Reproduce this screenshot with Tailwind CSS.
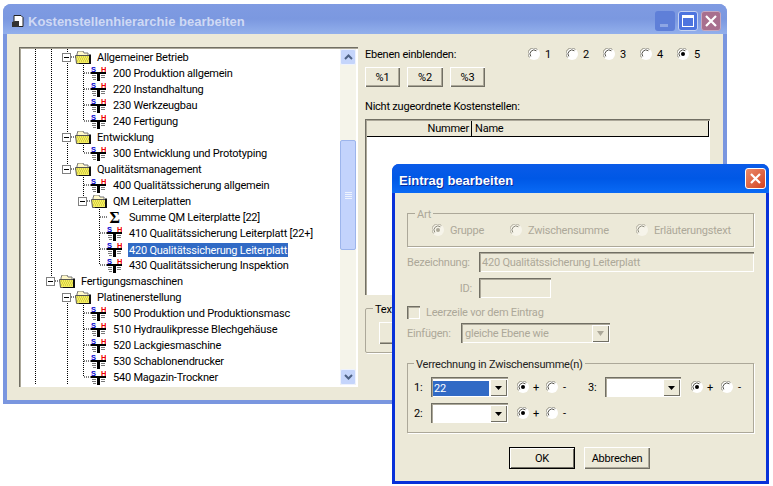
<!DOCTYPE html>
<html lang="de">
<head>
  <meta charset="UTF-8" />
  <title>Kostenstellenhierarchie bearbeiten</title>
  <script src="https://cdn.jsdelivr.net/npm/@tailwindcss/browser@4"></script>
</head>
<body class="bg-white w-[773px] h-[486px] overflow-hidden relative font-['Roboto',sans-serif] text-[11px] tracking-[-0.22px] leading-[16px] text-black [&_span:not(:has(*))]:translate-y-px [&_button]:pt-[2px]">

  <!-- shared icons -->
  <svg class="hidden">
    <symbol id="cost" viewBox="0 0 15 15">
      <text x="0" y="5.500" font-size="7.500" font-weight="bold" fill="#0000d0" font-family="Liberation Sans">S</text>
      <text x="10" y="5.500" font-size="7.500" font-weight="bold" fill="#f00000" font-family="Liberation Sans">H</text>
      <rect x="0" y="6" width="15" height="2" fill="#000"/>
      <rect x="6" y="8" width="3" height="7" fill="#000"/>
      <path d="M1 9.500h4M1 11.500h4M2 13.500h3M10 9.500h4M10 11.500h4" stroke="#777" fill="none"/>
    </symbol>
    <symbol id="folder" viewBox="0 0 16 13">
      <path d="M2 3l1-3h5l1 2h4v3H2z" fill="#fff8c8" stroke="#777"/>
      <path d="M0.500 4.500h14v8h-13z" fill="#f6f060" stroke="#555"/>
      <path d="M2 6h11M3 8h11M2 10h11" stroke="#b8b030" stroke-dasharray="1 1"/>
      <path d="M15 3.500v9.500H4" stroke="#111" stroke-width="2" fill="none"/>
    </symbol>
    <symbol id="minus" viewBox="0 0 9 9">
      <rect x="0.500" y="0.500" width="8" height="8" fill="#fff" stroke="#808080"/>
      <path d="M2 4.500h5" stroke="#000"/>
    </symbol>
    <symbol id="radio" viewBox="0 0 12 12">
      <circle cx="6" cy="6" r="6" fill="#fff"/>
      <path d="M1.600 9.500A5.500 5.500 0 0 1 9.500 1.600" fill="none" stroke="#8c8a7c"/>
      <path d="M2.800 8.400A4 4 0 0 1 8.400 2.800" fill="none" stroke="#55544c"/>
    </symbol>
    <symbol id="radio-off" viewBox="0 0 12 12">
      <circle cx="6" cy="6" r="6" fill="#f6f4ea"/>
      <path d="M1.600 9.500A5.500 5.500 0 0 1 9.500 1.600" fill="none" stroke="#aca899"/>
      <path d="M2.800 8.400A4 4 0 0 1 8.400 2.800" fill="none" stroke="#8c8a7c"/>
    </symbol>
    <symbol id="down" viewBox="0 0 17 18">
      <path d="M5 7h7l-3.500 4z" fill="#000"/>
    </symbol>
  </svg>

  <!-- main window -->
  <div class="absolute left-[3px] top-[4px] w-[724px] h-[400px] rounded-t-[8px] bg-[#7a96df] flex flex-col">
    <div class="h-[30px] shrink-0 pt-[4px] rounded-t-[8px] bg-gradient-to-b from-[#7f9be2] via-[#7b98e0] to-[#93b0ec] flex items-center pl-[9px] pr-[6px]">
      <svg class="w-[12px] h-[13px]" viewBox="0 0 12 13">
        <path d="M2 0.500h7l2 2v9H2z" fill="#fff" stroke="#222"/>
        <path d="M0 7l3-1h4v6H0z" fill="#333"/>
      </svg>
      <span class="ml-[4px] font-['Liberation_Sans',sans-serif] font-bold text-[13px] tracking-normal text-[#cfd9f4] flex-1">Kostenstellenhierarchie bearbeiten</span>
      <div class="flex gap-[3px]">
        <div class="w-[20px] h-[20px] rounded-[3px] bg-[#5f7fd8] flex items-end pl-[5px] pb-[4px]"><div class="w-[8px] h-[3px] bg-[#8ea6e4]"></div></div>
        <div class="w-[20px] h-[20px] rounded-[3px] border border-[#c5d2f2] bg-[#4d74df] flex items-center justify-center"><div class="w-[12px] h-[12px] border border-white border-t-[3px]"></div></div>
        <div class="w-[20px] h-[20px] rounded-[3px] bg-[#a86f8e] border border-[#c5a8c0] flex items-center justify-center">
          <svg class="w-[12px] h-[12px]" viewBox="0 0 12 12"><path d="M1 1l10 10M11 1L1 11" stroke="#fff" stroke-width="2.200"/></svg>
        </div>
      </div>
    </div>

    <div class="mx-[4px] mb-[4px] flex-1 bg-[#ece9d8] flex pl-[12px] pt-[13px] gap-[7px]">
      <!-- tree -->
      <div class="w-[339px] h-[340px] bg-white p-[2px] shadow-[inset_1px_1px_0_#716f64,inset_2px_2px_0_#aca899,inset_-1px_-1px_0_#fff] relative flex">
        <div id="tree" class="relative w-[320px] h-[336px] overflow-hidden">
          <svg class="absolute left-0 top-0 w-[320px] h-[336px]" viewBox="21 49 320 336">
            <g stroke="#000" stroke-dasharray="1 1" fill="none">
              <path d="M35.500 49v336M51.500 49v227M67.500 49v116M67.500 301v84"/>
              <path d="M83.500 61v60M83.500 141v12M83.500 173v28M83.500 301v76M99.500 205v60"/>
              <path d="M84 73h7M84 89h7M84 105h7M84 121h7M84 153h7M84 185h7M84 313h7M84 329h7M84 345h7M84 361h7M84 377h7"/>
              <path d="M100 217h7M100 233h7M100 249h7M100 265h7"/>
              <path d="M71 57h5M71 137h5M71 169h5M87 201h4M55 281h4M71 297h5"/>
            </g>
          </svg>
        </div>
        <!-- scrollbar -->
        <div class="w-[16px] h-[336px] bg-[#f5f4ea] flex flex-col relative">
          <div class="w-[16px] h-[16px] rounded-[2px] bg-[#c5d5fb] border border-[#eef2fd] flex items-center justify-center">
            <svg class="w-[9px] h-[6px]" viewBox="0 0 9 6"><path d="M1 5l3.500-3.500L8 5" stroke="#4d6185" stroke-width="2" fill="none"/></svg>
          </div>
          <div class="mt-[75px] w-[16px] h-[110px] rounded-[2px] bg-[#c3d3fc] border border-[#9db5ec] flex flex-col items-center justify-center gap-[1px]">
            <div class="w-[7px] h-px bg-[#eef3fe]"></div><div class="w-[7px] h-px bg-[#eef3fe]"></div><div class="w-[7px] h-px bg-[#eef3fe]"></div><div class="w-[7px] h-px bg-[#eef3fe]"></div>
          </div>
          <div class="absolute bottom-0 left-0 w-[16px] h-[16px] rounded-[2px] bg-[#c5d5fb] border border-[#eef2fd] flex items-center justify-center">
            <svg class="w-[9px] h-[6px]" viewBox="0 0 9 6"><path d="M1 1l3.500 3.500L8 1" stroke="#4d6185" stroke-width="2" fill="none"/></svg>
          </div>
        </div>
      </div>

      <!-- right panel -->
      <div class="w-[345px] flex flex-col">
        <div class="h-[14px] flex items-center relative">
          <span class="w-[163px]">Ebenen einblenden:</span>
          <span class="w-[38px] flex items-center"><svg class="w-[12px] h-[12px]"><use href="#radio"/></svg><span class="ml-[5px]">1</span></span>
          <span class="w-[37px] flex items-center"><svg class="w-[12px] h-[12px]"><use href="#radio"/></svg><span class="ml-[5px]">2</span></span>
          <span class="w-[37px] flex items-center"><svg class="w-[12px] h-[12px]"><use href="#radio"/></svg><span class="ml-[5px]">3</span></span>
          <span class="w-[37px] flex items-center"><svg class="w-[12px] h-[12px]"><use href="#radio"/></svg><span class="ml-[5px]">4</span></span>
          <span class="w-[33px] flex items-center relative"><svg class="w-[12px] h-[12px]"><use href="#radio"/></svg><span class="absolute left-[4px] top-[5px] w-[4px] h-[4px] rounded-full bg-black"></span><span class="ml-[5px]">5</span></span>
        </div>
        <div class="flex gap-[7px] mt-[6px]">
          <button class="w-[35px] h-[20px] bg-[#ece9d8] shadow-[inset_1px_1px_0_#fff,inset_-1px_-1px_0_#716f64,inset_-2px_-2px_0_#aca899]">%1</button>
          <button class="w-[36px] h-[20px] bg-[#ece9d8] shadow-[inset_1px_1px_0_#fff,inset_-1px_-1px_0_#716f64,inset_-2px_-2px_0_#aca899]">%2</button>
          <button class="w-[35px] h-[20px] bg-[#ece9d8] shadow-[inset_1px_1px_0_#fff,inset_-1px_-1px_0_#716f64,inset_-2px_-2px_0_#aca899]">%3</button>
        </div>
        <div class="mt-[11px]"><span class="block">Nicht zugeordnete Kostenstellen:</span></div>
        <div class="mt-[5px] h-[176px] bg-white p-[2px] shadow-[inset_1px_1px_0_#716f64,inset_2px_2px_0_#aca899,inset_-1px_-1px_0_#fff]">
          <div class="h-[16px] w-[342px] flex bg-[#ece9d8] border-b border-black border-r border-r-black">
            <div class="w-[105px] text-right pr-[2px] border-r border-black">Nummer</div>
            <div class="pl-[3px]">Name</div>
          </div>
        </div>
        <div class="mt-[13px] h-[45px] relative border border-[#aca899] shadow-[1px_1px_0_#fff] rounded-[2px] pl-[13px] pt-[13px]">
          <span class="absolute left-[7px] -top-[8px] px-[2px] bg-[#ece9d8]">Text</span>
          <button class="block w-[80px] h-[22px] bg-[#ece9d8] shadow-[inset_1px_1px_0_#fff,inset_-1px_-1px_0_#716f64,inset_-2px_-2px_0_#aca899]"></button>
        </div>
      </div>
    </div>
  </div>

  <!-- dialog -->
  <div class="absolute left-[392px] top-[164px] w-[377px] h-[320px] rounded-t-[7px] bg-[#0831d9] flex flex-col">
    <div class="h-[29px] shrink-0 pt-[3px] rounded-t-[7px] bg-gradient-to-b from-[#0a5be8] via-[#0058e6] to-[#0a6af5] flex items-center pl-[7px] pr-[3px]">
      <span class="flex-1 font-['Liberation_Sans',sans-serif] font-bold text-[13px] tracking-normal text-white [text-shadow:1px_1px_0_#0a2a9c]">Eintrag bearbeiten</span>
      <div class="w-[21px] h-[21px] -mt-[3px] rounded-[3px] bg-gradient-to-br from-[#ea8a6a] to-[#d2401c] border border-white flex items-center justify-center">
        <svg class="w-[13px] h-[13px]" viewBox="0 0 13 13"><path d="M2 2l9 9M11 2l-9 9" stroke="#fff" stroke-width="2.200"/></svg>
      </div>
    </div>
    <div class="mx-[3px] mb-[3px] flex-1 bg-[#ece9d8] pl-[12px] pt-[20px] flex flex-col text-[#aca899]">
      <!-- Art -->
      <div class="h-[34px] w-[347px] relative border border-[#aca899] shadow-[1px_1px_0_#fff] flex items-center pl-[24px]">
        <span class="absolute left-[7px] -top-[8px] px-[2px] bg-[#ece9d8]">Art</span>
        <span class="w-[78px] flex items-center relative"><svg class="w-[12px] h-[12px]"><use href="#radio-off"/></svg><span class="absolute left-[4px] top-[5px] w-[4px] h-[4px] rounded-full bg-[#aca899]"></span><span class="ml-[6px]">Gruppe</span></span>
        <span class="w-[126px] flex items-center"><svg class="w-[12px] h-[12px]"><use href="#radio-off"/></svg><span class="ml-[6px]">Zwischensumme</span></span>
        <span class="flex items-center"><svg class="w-[12px] h-[12px]"><use href="#radio-off"/></svg><span class="ml-[6px]">Erläuterungstext</span></span>
      </div>
      <div class="mt-[5px] flex items-center h-[20px]">
        <span class="w-[72px]">Bezeichnung:</span>
        <div class="w-[275px] h-[20px] pl-[3px] flex items-center shadow-[inset_1px_1px_0_#716f64,inset_2px_2px_0_#aca899,inset_-1px_-1px_0_#fff]"><span>420 Qualitätssicherung Leiterplatt</span></div>
      </div>
      <div class="mt-[6px] flex items-center h-[20px]">
        <span class="w-[65px] mr-[7px] text-right">ID:</span>
        <div class="w-[72px] h-[20px] shadow-[inset_1px_1px_0_#716f64,inset_2px_2px_0_#aca899,inset_-1px_-1px_0_#fff]"></div>
      </div>
      <div class="mt-[8px] flex items-center h-[12px]">
        <div class="w-[13px] h-[13px] shadow-[inset_1px_1px_0_#716f64,inset_2px_2px_0_#aca899,inset_-1px_-1px_0_#fff]"></div>
        <span class="ml-[6px]">Leerzeile vor dem Eintrag</span>
      </div>
      <div class="mt-[5px] flex items-center h-[20px]">
        <span class="w-[54px]">Einfügen:</span>
        <div class="w-[149px] h-[20px] flex items-center justify-between pl-[4px] pr-[1px] shadow-[inset_1px_1px_0_#716f64,inset_2px_2px_0_#aca899,inset_-1px_-1px_0_#fff]">
          <span>gleiche Ebene wie</span>
          <div class="w-[17px] h-[17px] mt-[1px] bg-[#ece9d8] shadow-[inset_1px_1px_0_#fff,inset_-1px_-1px_0_#716f64] flex items-center justify-center"><svg class="w-[9px] h-[5px]" viewBox="0 0 9 5"><path d="M1 0h7L4.500 5z" fill="#aca899"/></svg></div>
        </div>
      </div>

      <!-- Verrechnung -->
      <div class="mt-[20px] h-[70px] w-[347px] relative border border-[#aca899] shadow-[1px_1px_0_#fff] text-black pl-[6px] pt-[13px] flex flex-col gap-[6px]">
        <span class="absolute left-[6px] -top-[8px] px-[2px] bg-[#ece9d8] text-[#222]">Verrechnung in Zwischensumme(n)</span>
        <div class="flex items-center h-[20px]">
          <span class="w-[17px]">1:</span>
          <div class="w-[77px] h-[20px] bg-white flex items-center justify-between p-[2px] pr-[1px] shadow-[inset_1px_1px_0_#716f64,inset_2px_2px_0_#aca899,inset_-1px_-1px_0_#fff]">
            <span class="w-[56px] h-[15px] bg-[#316ac5] text-white pl-px">22</span>
            <div class="w-[17px] h-[17px] bg-[#ece9d8] shadow-[inset_1px_1px_0_#fff,inset_-1px_-1px_0_#716f64]"><svg class="w-[17px] h-[18px]"><use href="#down"/></svg></div>
          </div>
          <span class="ml-[9px] w-[29px] flex items-center relative"><svg class="w-[12px] h-[12px]"><use href="#radio"/></svg><span class="absolute left-[4px] top-[5px] w-[4px] h-[4px] rounded-full bg-black"></span><span class="ml-[4px]">+</span></span>
          <span class="w-[42px] flex items-center"><svg class="w-[12px] h-[12px]"><use href="#radio"/></svg><span class="ml-[5px]">-</span></span>
          <span class="w-[17px]">3:</span>
          <div class="w-[76px] h-[20px] bg-white flex items-center justify-end p-[2px] pr-[1px] shadow-[inset_1px_1px_0_#716f64,inset_2px_2px_0_#aca899,inset_-1px_-1px_0_#fff]">
            <div class="w-[17px] h-[17px] bg-[#ece9d8] shadow-[inset_1px_1px_0_#fff,inset_-1px_-1px_0_#716f64]"><svg class="w-[17px] h-[18px]"><use href="#down"/></svg></div>
          </div>
          <span class="ml-[10px] w-[30px] flex items-center relative"><svg class="w-[12px] h-[12px]"><use href="#radio"/></svg><span class="absolute left-[4px] top-[5px] w-[4px] h-[4px] rounded-full bg-black"></span><span class="ml-[4px]">+</span></span>
          <span class="flex items-center"><svg class="w-[12px] h-[12px]"><use href="#radio"/></svg><span class="ml-[5px]">-</span></span>
        </div>
        <div class="flex items-center h-[20px]">
          <span class="w-[17px]">2:</span>
          <div class="w-[77px] h-[20px] bg-white flex items-center justify-end p-[2px] pr-[1px] shadow-[inset_1px_1px_0_#716f64,inset_2px_2px_0_#aca899,inset_-1px_-1px_0_#fff]">
            <div class="w-[17px] h-[17px] bg-[#ece9d8] shadow-[inset_1px_1px_0_#fff,inset_-1px_-1px_0_#716f64]"><svg class="w-[17px] h-[18px]"><use href="#down"/></svg></div>
          </div>
          <span class="ml-[9px] w-[29px] flex items-center relative"><svg class="w-[12px] h-[12px]"><use href="#radio"/></svg><span class="absolute left-[4px] top-[5px] w-[4px] h-[4px] rounded-full bg-black"></span><span class="ml-[4px]">+</span></span>
          <span class="flex items-center"><svg class="w-[12px] h-[12px]"><use href="#radio"/></svg><span class="ml-[5px]">-</span></span>
        </div>
      </div>

      <div class="mt-[14px] ml-[102px] flex gap-[9px] text-black">
        <button class="w-[66px] h-[22px] bg-[#ece9d8] border border-black shadow-[inset_1px_1px_0_#fff,inset_-1px_-1px_0_#716f64]">OK</button>
        <button class="w-[66px] h-[22px] bg-[#ece9d8] shadow-[inset_1px_1px_0_#fff,inset_-1px_-1px_0_#716f64,inset_-2px_-2px_0_#aca899]">Abbrechen</button>
      </div>
    </div>
  </div>

  <script>
    // x = position of the row's first icon inside the tree
    const rows = [
      ["g", 41, "Allgemeiner Betrieb"],
      ["c", 70, "200 Produktion allgemein"],
      ["c", 70, "220 Instandhaltung"],
      ["c", 70, "230 Werkzeugbau"],
      ["c", 70, "240 Fertigung"],
      ["g", 41, "Entwicklung"],
      ["c", 70, "300 Entwicklung und Prototyping"],
      ["g", 41, "Qualitätsmanagement"],
      ["c", 70, "400 Qualitätssicherung allgemein"],
      ["g", 57, "QM Leiterplatten"],
      ["s", 86, "Summe QM Leiterplatte [22]"],
      ["c", 86, "410 Qualitätssicherung Leiterplatt [22+]"],
      ["c", 86, "420 Qualitätssicherung Leiterplatt", true],
      ["c", 86, "430 Qualitätssicherung Inspektion"],
      ["g", 25, "Fertigungsmaschinen"],
      ["g", 41, "Platinenerstellung"],
      ["c", 70, "500 Produktion und Produktionsmasc"],
      ["c", 70, "510 Hydraulikpresse Blechgehäuse"],
      ["c", 70, "520 Lackgiesmaschine"],
      ["c", 70, "530 Schablonendrucker"],
      ["c", 70, "540 Magazin-Trockner"],
    ];

    const tree = document.getElementById("tree");
    tree.insertAdjacentHTML("beforeend", rows.map(([type, x, text, selected]) => {
      let icon;
      if (type === "g") {
        icon = `<svg class="w-[9px] h-[9px] shrink-0"><use href="#minus"/></svg>
                <svg class="w-[16px] h-[13px] ml-[4px] mr-[5px] shrink-0"><use href="#folder"/></svg>`;
      } else if (type === "c") {
        icon = `<svg class="w-[15px] h-[15px] mr-[6px] shrink-0"><use href="#cost"/></svg>`;
      } else {
        icon = `<span class="w-[15px] mr-[6px] shrink-0 text-center font-['Liberation_Serif',serif] font-bold text-[16px]">Σ</span>`;
      }
      const label = selected
        ? `<span class="bg-[#316ac5] text-white px-px h-[14px] leading-[15px]">${text}</span>`
        : `<span class="px-px">${text}</span>`;
      return `<div class="h-[16px] flex items-center relative whitespace-nowrap" style="padding-left:${x}px">${icon}${label}</div>`;
    }).join(""));
  </script>
</body>
</html>
